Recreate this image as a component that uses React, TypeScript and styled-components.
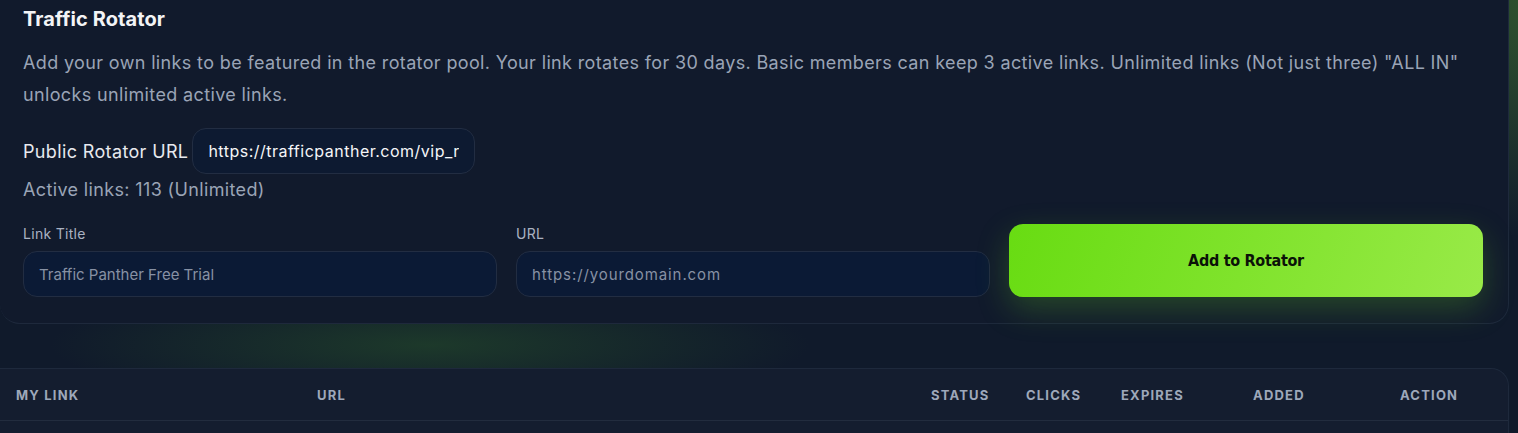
import React from 'react';
import styled, { createGlobalStyle } from 'styled-components';

const GlobalStyle = createGlobalStyle`
  html, body {
    margin: 0;
    padding: 0;
  }
  body {
    background-color: #101a2b;
    background-image:
      radial-gradient(ellipse 260px 240px at 1560px 0px, rgba(62, 110, 48, 0.75), rgba(62, 110, 48, 0) 100%),
      radial-gradient(ellipse 380px 60px at 430px 345px, rgba(34, 70, 42, 0.7), rgba(34, 70, 42, 0) 100%);
    font-family: 'Inter', 'Noto Sans', sans-serif;
    overflow: hidden;
  }
`;

const Page = styled.div`
  width: 1509px;
  display: flex;
  flex-direction: column;
  gap: 44px;
`;

const Card = styled.section`
  margin-top: -20px;
  padding: 24px 25px 26px 23px;
  background: #111a2c;
  border: 1px solid #1e293c;
  border-left: none;
  border-radius: 0 0 20px 20px;
  display: flex;
  flex-direction: column;
`;

const Title = styled.h2`
  margin: 0;
  font-size: 20px;
  line-height: 28px;
  font-weight: 700;
  color: #f3f4f6;
  letter-spacing: 0.1px;
`;

const Description = styled.p`
  margin: 14px 0 0;
  font-size: 18px;
  line-height: 32px;
  color: #9aa4b6;
  letter-spacing: 0.36px;
  max-width: 1460px;
`;

const UrlRow = styled.div`
  margin-top: 17px;
  display: flex;
  align-items: center;
  gap: 4px;
`;

const UrlLabel = styled.span`
  font-size: 18px;
  color: #e7e9ee;
  letter-spacing: 0.36px;
`;

const UrlBox = styled.input`
  box-sizing: border-box;
  width: 283px;
  height: 46px;
  padding: 0 15px;
  border: 1px solid #222d42;
  border-radius: 14px;
  background: #0d1a31;
  font-family: 'Inter', sans-serif;
  font-size: 16px;
  letter-spacing: 0.5px;
  color: #f5f6f8;
  outline: none;
`;

const Muted = styled.div`
  margin-top: 4px;
  font-size: 18px;
  line-height: 24px;
  color: #9aa4b6;
  letter-spacing: 0.36px;
`;

const FormRow = styled.div`
  margin-top: 22px;
  display: grid;
  grid-template-columns: repeat(3, 1fr);
  gap: 19px;
  align-items: stretch;
`;

const Field = styled.label`
  display: flex;
  flex-direction: column;
  gap: 7px;
`;

const FieldLabel = styled.span`
  font-size: 14px;
  line-height: 20px;
  color: #aab2c2;
  letter-spacing: 0.3px;
`;

const Input = styled.input<{ $spacing?: number }>`
  box-sizing: border-box;
  height: 46px;
  width: 100%;
  padding: 0 15px;
  border: 1px solid #222d42;
  border-radius: 14px;
  background: #0b1a35;
  color: #e5e7eb;
  font-family: 'Inter', sans-serif;
  font-size: 15px;
  letter-spacing: ${(p) => p.$spacing ?? 0}px;
  outline: none;
  &::placeholder {
    color: #8791a4;
  }
`;

const AddButton = styled.button`
  border: none;
  border-radius: 14px;
  background: linear-gradient(110deg, #68dc12 0%, #80e32c 50%, #99ea48 100%);
  box-shadow: 0 12px 32px rgba(100, 200, 30, 0.26);
  color: #0b1208;
  font-family: 'DejaVu Sans Condensed', 'DejaVu Sans', sans-serif;
  font-stretch: condensed;
  font-weight: 700;
  font-size: 16px;
  letter-spacing: -0.3px;
  cursor: pointer;
`;

const TableCard = styled.section`
  background: #141d2f;
  border: 1px solid #1e293c;
  border-left: none;
  border-bottom: none;
  border-radius: 0 18px 0 0;
  height: 80px;
`;

const HeaderRow = styled.div`
  display: grid;
  grid-template-columns: 301px 614px 95px 95px 132px 147px 1fr;
  align-items: center;
  height: 51px;
  padding-left: 16px;
  border-bottom: 1px solid #222c3e;
`;

const HeadCell = styled.span`
  font-family: 'Inter', sans-serif;
  font-size: 13px;
  font-weight: 700;
  letter-spacing: 1.2px;
  color: #9ea8ba;
  text-transform: uppercase;
`;

const columns = ['My Link', 'URL', 'Status', 'Clicks', 'Expires', 'Added', 'Action'];

export default function App() {
  return (
    <>
      <GlobalStyle />
      <Page>
        <Card>
          <Title>Traffic Rotator</Title>
          <Description>
            Add your own links to be featured in the rotator pool. Your link rotates for 30 days.
            Basic members can keep 3 active links. Unlimited links (Not just three) "ALL IN"
            unlocks unlimited active links.
          </Description>
          <UrlRow>
            <UrlLabel>Public Rotator URL</UrlLabel>
            <UrlBox readOnly value="https://trafficpanther.com/vip_rotator" />
          </UrlRow>
          <Muted>Active links: 113 (Unlimited)</Muted>
          <FormRow>
            <Field>
              <FieldLabel>Link Title</FieldLabel>
              <Input placeholder="Traffic Panther Free Trial" />
            </Field>
            <Field>
              <FieldLabel>URL</FieldLabel>
              <Input placeholder="https://yourdomain.com" $spacing={0.9} />
            </Field>
            <AddButton>Add to Rotator</AddButton>
          </FormRow>
        </Card>
        <TableCard>
          <HeaderRow>
            {columns.map((c) => (
              <HeadCell key={c}>{c}</HeadCell>
            ))}
          </HeaderRow>
        </TableCard>
      </Page>
    </>
  );
}
